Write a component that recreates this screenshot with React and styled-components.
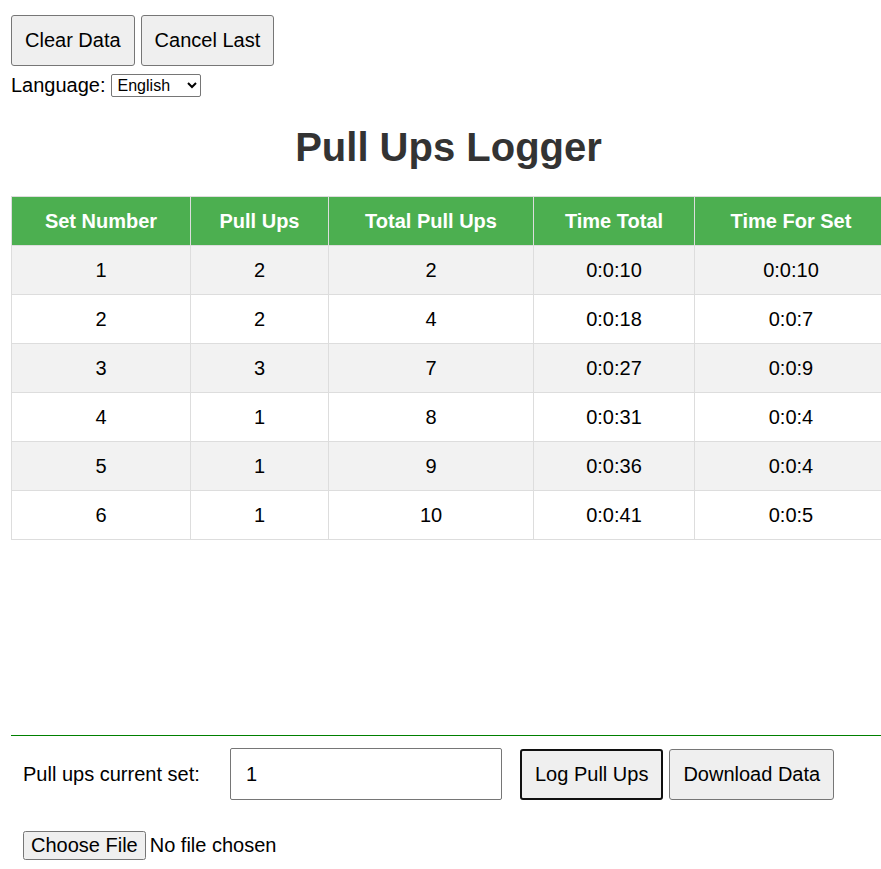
import React, { useState } from "react";
import styled, { createGlobalStyle } from "styled-components";

const GlobalStyle = createGlobalStyle`
  html, body {
    margin: 0;
    padding: 0;
    background: #fff;
    overflow: hidden;
  }
  body {
    font-family: "Liberation Sans", Arial, sans-serif;
    color: #000;
  }
`;

const sets = [
  { set: 1, pullUps: 2, total: 2, timeTotal: "0:0:10", timeSet: "0:0:10" },
  { set: 2, pullUps: 2, total: 4, timeTotal: "0:0:18", timeSet: "0:0:7" },
  { set: 3, pullUps: 3, total: 7, timeTotal: "0:0:27", timeSet: "0:0:9" },
  { set: 4, pullUps: 1, total: 8, timeTotal: "0:0:31", timeSet: "0:0:4" },
  { set: 5, pullUps: 1, total: 9, timeTotal: "0:0:36", timeSet: "0:0:4" },
  { set: 6, pullUps: 1, total: 10, timeTotal: "0:0:41", timeSet: "0:0:5" },
];

const columns = [
  { label: "Set Number", width: 179 },
  { label: "Pull Ups", width: 138 },
  { label: "Total Pull Ups", width: 205 },
  { label: "Time Total", width: 161 },
  { label: "Time For Set", width: 193 },
];

export default function App() {
  const [current, setCurrent] = useState("1");
  const [language, setLanguage] = useState("en");

  return (
    <>
      <GlobalStyle />
      <Page>
        <Controls>
          <Button>Clear Data</Button>
          <Button>Cancel Last</Button>
        </Controls>
        <LanguageRow>
          Language:
          <Select value={language} onChange={(e) => setLanguage(e.target.value)}>
            <option value="en">English</option>
            <option value="ru">Русский</option>
          </Select>
        </LanguageRow>
        <Title>Pull Ups Logger</Title>
        <Table>
          <thead>
            <tr>
              {columns.map((c) => (
                <Th key={c.label} style={{ width: c.width }}>
                  {c.label}
                </Th>
              ))}
            </tr>
          </thead>
          <tbody>
            {sets.map((row, i) => (
              <Row key={row.set} $striped={i % 2 === 0}>
                <Td>{row.set}</Td>
                <Td>{row.pullUps}</Td>
                <Td>{row.total}</Td>
                <Td>{row.timeTotal}</Td>
                <Td>{row.timeSet}</Td>
              </Row>
            ))}
          </tbody>
        </Table>

        <Footer>
          <InputRow>
            <Label>Pull ups current set:</Label>
            <NumberInput
              type="text"
              value={current}
              onChange={(e) => setCurrent(e.target.value)}
            />
            <ButtonGroup>
              <Button $active>Log Pull Ups</Button>
              <Button>Download Data</Button>
            </ButtonGroup>
          </InputRow>
          <FileInput type="file" />
        </Footer>
      </Page>
    </>
  );
}

const Page = styled.div`
  min-height: 100vh;
  box-sizing: border-box;
  padding: 15px 0 9px 11px;
  display: flex;
  flex-direction: column;
`;

const Controls = styled.div`
  display: flex;
  gap: 6px;
`;

const Button = styled.button`
  font-family: "Liberation Sans", Arial, sans-serif;
  font-size: 20px;
  line-height: 23px;
  padding: ${(p) => (p.$active ? "12px 13px" : "13px 13px")};
  background: #efefef;
  color: #000;
  border: ${(p) => (p.$active ? "2px solid #101010" : "1px solid #767676")};
  border-radius: 3px;
  cursor: pointer;
  &:hover {
    background: #e5e5e5;
  }
`;

const LanguageRow = styled.div`
  display: flex;
  align-items: center;
  gap: 5px;
  font-size: 20px;
  margin-top: 7px;
  height: 24px;
`;

const Select = styled.select`
  font-family: "Liberation Sans", Arial, sans-serif;
  font-size: 16px;
  width: 90px;
  height: 23px;
  padding: 0 2px;
  border: 1px solid #767676;
  border-radius: 2px;
  background: #fff;
  color: #000;
`;

const Title = styled.h1`
  margin: 27px 0 0 0;
  height: 46px;
  line-height: 46px;
  text-align: center;
  font-size: 40px;
  font-weight: bold;
  color: #333;
  padding-left: 5px;
`;

const Table = styled.table`
  margin-top: 26px;
  border-collapse: collapse;
  width: 876px;
  table-layout: fixed;
  font-size: 20px;
`;

const Th = styled.th`
  background: #4caf50;
  color: #fff;
  font-weight: bold;
  height: 49px;
  padding: 0 8px;
  border: 1px solid #ddd;
  text-align: center;
  box-sizing: border-box;
`;

const Row = styled.tr`
  background: ${(p) => (p.$striped ? "#f2f2f2" : "#fff")};
`;

const Td = styled.td`
  height: 49px;
  padding: 0 8px;
  border: 1px solid #ddd;
  text-align: center;
  box-sizing: border-box;
`;

const Footer = styled.div`
  margin-top: auto;
  border-top: 1px solid green;
  padding: 12px 0 0 12px;
  display: flex;
  flex-direction: column;
  gap: 31px;
`;

const InputRow = styled.div`
  display: flex;
  align-items: center;
`;

const Label = styled.label`
  font-size: 20px;
  width: 207px;
`;

const NumberInput = styled.input`
  box-sizing: border-box;
  width: 272px;
  height: 52px;
  padding: 0 15px;
  font-family: "Liberation Sans", Arial, sans-serif;
  font-size: 20px;
  border: 1px solid #767676;
  border-radius: 2px;
  margin-right: 18px;
`;

const ButtonGroup = styled.div`
  display: flex;
  gap: 6px;
`;

const FileInput = styled.input`
  font-family: "Liberation Sans", Arial, sans-serif;
  font-size: 20px;
  align-self: flex-start;
`;
